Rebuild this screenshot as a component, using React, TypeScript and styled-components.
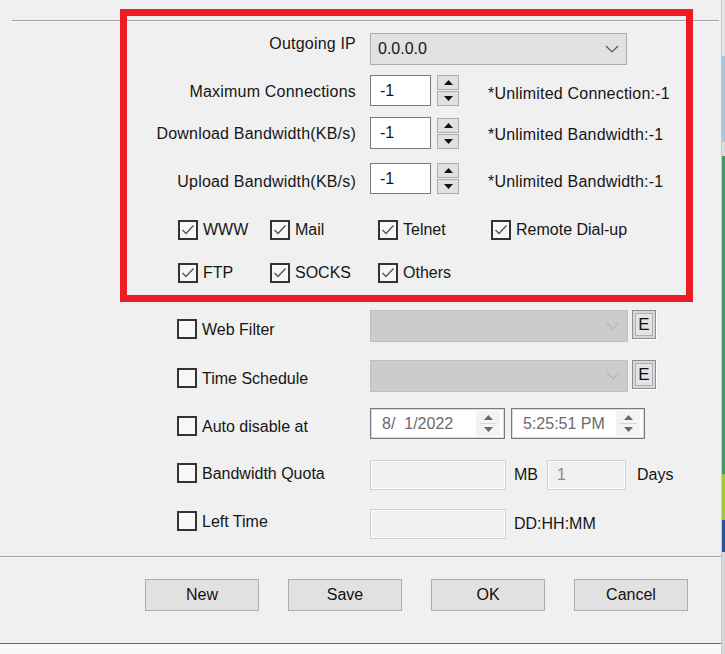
import React, { FC } from "react";
import styled, { createGlobalStyle } from "styled-components";

const GlobalStyle = createGlobalStyle`
  html, body {
    margin: 0;
    padding: 0;
    background: #f0f0f0;
  }
  body {
    font-family: "Liberation Sans", Arial, sans-serif;
    font-size: 16px;
    color: #161616;
  }
`;

const Check: FC<{ checked?: boolean }> = ({ checked }) => (
  <Box>
    {checked && (
      <svg width="16" height="16" viewBox="0 0 16 16">
        <polyline
          points="2.5,8 6,11.5 13.5,3.5"
          fill="none"
          stroke="#555"
          strokeWidth="1.4"
        />
      </svg>
    )}
  </Box>
);

const Chevron: FC<{ color?: string }> = ({ color = "#555" }) => (
  <svg width="14" height="8" viewBox="0 0 14 8">
    <polyline points="1,1 7,7 13,1" fill="none" stroke={color} strokeWidth="1.2" />
  </svg>
);

const Arrow: FC<{ down?: boolean; color?: string }> = ({ down, color = "#111" }) => (
  <svg width="9" height="5" viewBox="0 0 9 5">
    <polygon points={down ? "0,0 9,0 4.5,5" : "0,5 9,5 4.5,0"} fill={color} />
  </svg>
);

interface NumberRowProps {
  label: string;
  note: string;
  mt: number;
  h: number;
  labelDy: number;
  noteDy: number;
}

const NumberRow: FC<NumberRowProps> = ({ label, note, mt, h, labelDy, noteDy }) => (
  <Row $mt={mt} $h={h}>
    <Label $dy={labelDy}>{label}</Label>
    <NumInput $h={h}>-1</NumInput>
    <Spin>
      <SpinBtn>
        <Arrow />
      </SpinBtn>
      <SpinBtn>
        <Arrow down />
      </SpinBtn>
    </Spin>
    <Note $dy={noteDy}>{note}</Note>
  </Row>
);

const Picker: FC<{ value: string; w: number }> = ({ value, w }) => (
  <PickerBox $w={w}>
    <PickerText>{value}</PickerText>
    <PickerSpin>
      <Arrow color="#6a6a6a" />
      <PickerSep />
      <Arrow down color="#6a6a6a" />
    </PickerSpin>
  </PickerBox>
);

const services = [
  [
    { name: "WWW", w: 92 },
    { name: "Mail", w: 108 },
    { name: "Telnet", w: 113 },
    { name: "Remote Dial-up", w: 200 },
  ],
  [
    { name: "FTP", w: 92 },
    { name: "SOCKS", w: 108 },
    { name: "Others", w: 113 },
  ],
];

const edge = [
  { h: 56, c: "#e6e6e6" },
  { h: 86, c: "#a9c6dc" },
  { h: 14, c: "#dcdcdc" },
  { h: 318, c: "#3d9a63" },
  { h: 46, c: "#a5c83a" },
  { h: 32, c: "#2857a4" },
  { h: 102, c: "#d8d8d8" },
];

const App = () => {
  return (
    <Page>
      <GlobalStyle />
      <Dialog>
        <TopRule />

        <Row $mt={11} $h={32}>
          <Label $dy={-5}>Outgoing IP</Label>
          <Select $w={257}>
            <span>0.0.0.0</span>
            <Chevron />
          </Select>
        </Row>
        <NumberRow
          label="Maximum Connections"
          note="*Unlimited Connection:-1"
          mt={10}
          h={31}
          labelDy={1}
          noteDy={3}
        />
        <NumberRow
          label="Download Bandwidth(KB/s)"
          note="*Unlimited Bandwidth:-1"
          mt={11}
          h={32}
          labelDy={1}
          noteDy={2}
        />
        <NumberRow
          label="Upload Bandwidth(KB/s)"
          note="*Unlimited Bandwidth:-1"
          mt={14}
          h={31}
          labelDy={3}
          noteDy={3}
        />

        {services.map((line, i) => (
          <CheckLine key={i} $mt={i === 0 ? 25 : 21}>
            {line.map((s) => (
              <CheckItem key={s.name} $w={s.w}>
                <Check checked />
                <span>{s.name}</span>
              </CheckItem>
            ))}
          </CheckLine>
        ))}

        <OptRow $mt={26}>
          <OptCheck $dy={9}>
            <Check />
            <span>Web Filter</span>
          </OptCheck>
          <Select $w={258} $disabled>
            <span />
            <Chevron color="#b4b4b4" />
          </Select>
          <EButton>E</EButton>
        </OptRow>

        <OptRow $mt={18}>
          <OptCheck $dy={8}>
            <Check />
            <span>Time Schedule</span>
          </OptCheck>
          <Select $w={258} $disabled>
            <span />
            <Chevron color="#b4b4b4" />
          </Select>
          <EButton>E</EButton>
        </OptRow>

        <OptRow $mt={16}>
          <OptCheck $dy={8}>
            <Check />
            <span>Auto disable at</span>
          </OptCheck>
          <Picker value="8/  1/2022" w={135} />
          <Gap $w={6} />
          <Picker value="5:25:51 PM" w={134} />
        </OptRow>

        <OptRow $mt={20}>
          <OptCheck $dy={3}>
            <Check />
            <span>Bandwidth Quota</span>
          </OptCheck>
          <FlatInput $w={136} />
          <Unit $mr={9}>MB</Unit>
          <FlatInput $w={79}>1</FlatInput>
          <Unit $ml={11}>Days</Unit>
        </OptRow>

        <OptRow $mt={17}>
          <OptCheck $dy={2}>
            <Check />
            <span>Left Time</span>
          </OptCheck>
          <FlatInput $w={136} />
          <Unit>DD:HH:MM</Unit>
        </OptRow>

        <Separator />

        <ButtonBar>
          <Button>New</Button>
          <Button>Save</Button>
          <Button>OK</Button>
          <Button>Cancel</Button>
        </ButtonBar>

        <BottomEdge />

        <Highlight />
      </Dialog>
      <EdgeStrip>
        {edge.map((e, i) => (
          <EdgeSeg key={i} style={{ height: e.h, background: e.c }} />
        ))}
      </EdgeStrip>
    </Page>
  );
};

export default App;

const Page = styled.div`
  display: flex;
  width: 725px;
  height: 654px;
  overflow: hidden;
`;

const Dialog = styled.div`
  position: relative;
  width: 722px;
  display: flex;
  flex-direction: column;
`;

const TopRule = styled.div`
  margin: 20px 2px 0 12px;
  height: 0;
  border-top: 1px solid #a0a0a0;
  border-bottom: 1px solid #fbfbfb;
`;

const Highlight = styled.div`
  position: absolute;
  left: 120px;
  top: 9px;
  width: 573px;
  height: 293px;
  box-sizing: border-box;
  border: 7px solid #ed1c24;
  pointer-events: none;
`;

const Row = styled.div<{ $mt: number; $h: number }>`
  display: flex;
  align-items: center;
  margin-top: ${(p) => p.$mt}px;
  height: ${(p) => p.$h}px;
`;

/* $dy nudges the text off the row's centre line, as the dialog does */
const Label = styled.div<{ $dy: number }>`
  width: 356px;
  margin-right: 14px;
  text-align: right;
  white-space: nowrap;
  letter-spacing: 0.2px;
  margin-top: ${(p) => Math.max(p.$dy, 0) * 2}px;
  margin-bottom: ${(p) => Math.max(-p.$dy, 0) * 2}px;
`;

const Select = styled.div<{ $w: number; $disabled?: boolean }>`
  box-sizing: border-box;
  width: ${(p) => p.$w}px;
  height: 32px;
  display: flex;
  align-items: center;
  justify-content: space-between;
  padding: 0 7px 0 7px;
  background: ${(p) => (p.$disabled ? "#cccccc" : "#e1e1e1")};
  border: 1px solid ${(p) => (p.$disabled ? "#bfbfbf" : "#adadad")};
`;

const NumInput = styled.div<{ $h: number }>`
  box-sizing: border-box;
  width: 61px;
  height: ${(p) => p.$h}px;
  display: flex;
  align-items: center;
  padding-left: 9px;
  background: #fff;
  border: 1px solid #7a7a7a;
`;

const Spin = styled.div`
  margin-left: 6px;
  width: 22px;
  display: flex;
  flex-direction: column;
  gap: 1px;
`;

const SpinBtn = styled.div`
  box-sizing: border-box;
  height: 15px;
  display: flex;
  align-items: center;
  justify-content: center;
  background: #e1e1e1;
  border: 1px solid #adadad;
`;

const Note = styled.div<{ $dy: number }>`
  margin-left: 29px;
  margin-top: ${(p) => p.$dy * 2}px;
  white-space: nowrap;
  letter-spacing: 0.2px;
`;

const CheckLine = styled.div<{ $mt: number }>`
  display: flex;
  align-items: center;
  height: 22px;
  margin-top: ${(p) => p.$mt}px;
  padding-left: 178px;
`;

const CheckItem = styled.label<{ $w: number }>`
  width: ${(p) => p.$w}px;
  display: flex;
  align-items: center;
  gap: 5px;
  white-space: nowrap;
`;

const Box = styled.span`
  box-sizing: border-box;
  width: 20px;
  height: 20px;
  flex: none;
  display: flex;
  align-items: center;
  justify-content: center;
  background: #f7f7f7;
  border: 2px solid #333;
`;

const OptRow = styled.div<{ $mt: number }>`
  display: flex;
  align-items: flex-start;
  height: 32px;
  margin-top: ${(p) => p.$mt}px;
  padding-left: 177px;
`;

const OptCheck = styled.label<{ $dy: number }>`
  width: 193px;
  height: 20px;
  margin-top: ${(p) => p.$dy}px;
  display: flex;
  align-items: center;
  gap: 5px;
  white-space: nowrap;
  & > span:last-child {
    margin-top: 2px;
  }
`;

const EButton = styled.div`
  box-sizing: border-box;
  margin-left: 4px;
  width: 24px;
  height: 29px;
  display: flex;
  align-items: center;
  justify-content: center;
  font-size: 17px;
  color: #111;
  background: #e4e4e4;
  border: 1px solid #8e8e8e;
  box-shadow: inset 0 0 0 2px #d8d8d8, inset 0 0 0 3px #b0b0b0, 1px 1px 0 #fff;
`;

const PickerBox = styled.div<{ $w: number }>`
  box-sizing: border-box;
  width: ${(p) => p.$w}px;
  height: 31px;
  display: flex;
  align-items: center;
  justify-content: space-between;
  padding: 2px 4px 2px 11px;
  background: #fff;
  border: 1px solid #7a7a7a;
  box-shadow: inset 0 0 0 1px #d9d9d9;
`;

const PickerText = styled.span`
  color: #6b6b6b;
  white-space: pre;
`;

const PickerSpin = styled.div`
  width: 24px;
  height: 25px;
  display: flex;
  flex-direction: column;
  align-items: center;
  justify-content: center;
  gap: 3px;
  background: #f3f3f3;
`;

const PickerSep = styled.div`
  width: 18px;
  height: 1px;
  background: #d6d6d6;
`;

const Gap = styled.div<{ $w: number }>`
  width: ${(p) => p.$w}px;
`;

const FlatInput = styled.div<{ $w: number }>`
  box-sizing: border-box;
  width: ${(p) => p.$w}px;
  height: 30px;
  display: flex;
  align-items: center;
  padding-left: 9px;
  color: #8a8a8a;
  background: #f0f0f0;
  border: 1px solid #cfcfcf;
  box-shadow: inset 0 0 0 1px #fdfdfd;
`;

const Unit = styled.span<{ $ml?: number; $mr?: number }>`
  align-self: center;
  margin-top: -2px;
  margin-left: ${(p) => p.$ml ?? 8}px;
  margin-right: ${(p) => p.$mr ?? 0}px;
  white-space: nowrap;
`;

const Separator = styled.div`
  margin-top: 15px;
  height: 0;
  border-top: 1px solid #a0a0a0;
  border-bottom: 1px solid #fbfbfb;
`;

const ButtonBar = styled.div`
  display: flex;
  gap: 29px;
  margin-top: 21px;
  padding-left: 145px;
`;

const Button = styled.button`
  box-sizing: border-box;
  width: 114px;
  height: 32px;
  padding: 0;
  font-family: "Liberation Sans", Arial, sans-serif;
  font-size: 16px;
  color: #111;
  background: #e1e1e1;
  border: 1px solid #adadad;
  border-radius: 0;
`;

const BottomEdge = styled.div`
  margin-top: 32px;
  flex: 1;
  border-top: 1px solid #6a6a6a;
  background: #f9f9f9;
`;

const EdgeStrip = styled.div`
  width: 3px;
  display: flex;
  flex-direction: column;
  border-left: 1px solid #c8c8c8;
`;

const EdgeSeg = styled.div`
  flex: none;
`;
